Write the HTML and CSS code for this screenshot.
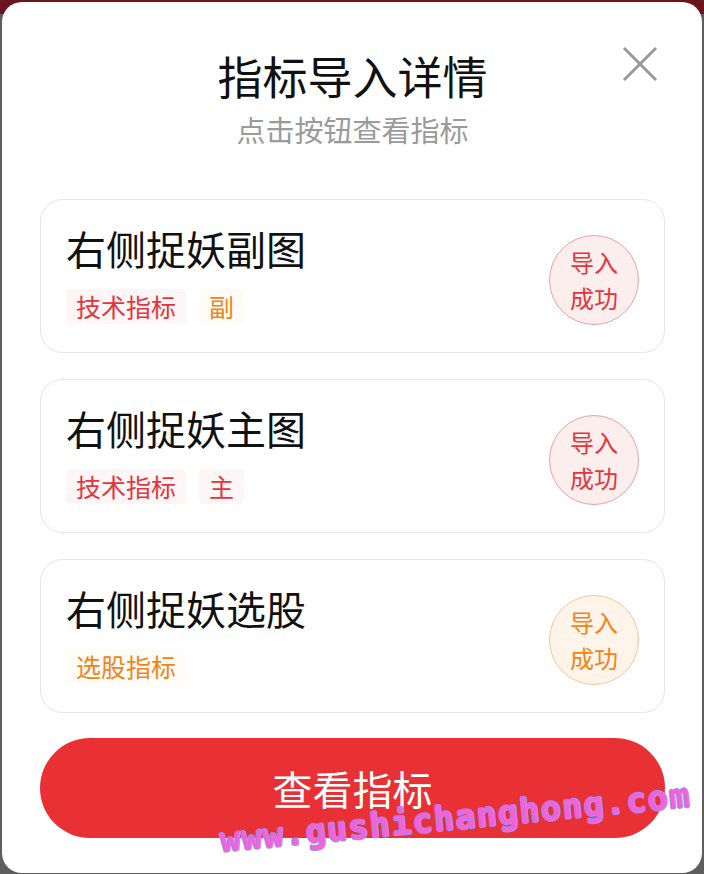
FILE: index.html
```html
<!DOCTYPE html>
<html lang="zh-CN">
<head>
    <meta charset="UTF-8">
    <meta name="viewport" content="width=device-width, initial-scale=1.0">
    <title>指标导入详情</title>
    <link rel="stylesheet" href="styles.css">
</head>
<body>
    <div class="modal">
        <button class="close" aria-label="关闭">
            <svg width="36" height="36" viewBox="0 0 36 36">
                <path d="M2 2 L34 34 M34 2 L2 34" stroke="#9a9a9a" stroke-width="3" fill="none"/>
            </svg>
        </button>

        <div class="header">
            <h1>指标导入详情</h1>
            <p class="subtitle">点击按钮查看指标</p>
        </div>

        <div class="list">
            <div class="card">
                <div class="info">
                    <h2>右侧捉妖副图</h2>
                    <div class="tags">
                        <span class="tag red">技术指标</span>
                        <span class="tag orange">副</span>
                    </div>
                </div>
                <div class="badge red">导入<br>成功</div>
            </div>

            <div class="card">
                <div class="info">
                    <h2>右侧捉妖主图</h2>
                    <div class="tags">
                        <span class="tag red">技术指标</span>
                        <span class="tag red">主</span>
                    </div>
                </div>
                <div class="badge red">导入<br>成功</div>
            </div>

            <div class="card">
                <div class="info">
                    <h2>右侧捉妖选股</h2>
                    <div class="tags">
                        <span class="tag orange">选股指标</span>
                    </div>
                </div>
                <div class="badge orange">导入<br>成功</div>
            </div>
        </div>

        <button class="view-btn">查看指标</button>

        <div class="watermark">www.gushichanghong.com</div>
    </div>
</body>
</html>
```

FILE: styles.css
```css
html, body {
    margin: 0;
    height: 100%;
}
body {
    font-family: "Noto Sans CJK SC", "Noto Sans", sans-serif;
    background: linear-gradient(#6a1420 0, #6a1420 14px, #5e5e5e 14px);
    padding: 2px;
    box-sizing: border-box;
}
.modal {
    position: relative;
    width: 700px;
    min-height: 870px;
    box-sizing: border-box;
    background-color: #fff;
    border-radius: 20px;
    padding: 47px 37px 35px 38px;
    overflow: hidden;
}
.close {
    position: absolute;
    top: 44px;
    right: 44px;
    width: 36px;
    height: 36px;
    padding: 0;
    border: none;
    background: none;
}
.close svg {
    display: block;
}
.header {
    text-align: center;
}
h1 {
    margin: 0;
    font-size: 45px;
    line-height: 53px;
    font-weight: 400;
    color: #111;
}
.subtitle {
    margin: 10px 0 0;
    font-size: 29px;
    line-height: 35px;
    color: #9a9a9a;
}
.list {
    margin-top: 52px;
    display: flex;
    flex-direction: column;
    gap: 26px;
}
.card {
    display: flex;
    align-items: center;
    justify-content: space-between;
    border: 1px solid #e6e6e6;
    border-radius: 22px;
    padding: 24px 25px 27px 25px;
}
h2 {
    margin: 0;
    font-size: 40px;
    line-height: 47px;
    font-weight: 400;
    color: #111;
}
.tags {
    display: flex;
    gap: 13px;
    margin-top: 17px;
}
.tag {
    font-size: 25px;
    line-height: 35px;
    padding: 0 10px;
    border-radius: 4px;
}
.tag.red {
    color: #e3353c;
    background-color: #fef6f6;
}
.tag.orange {
    color: #ef8519;
    background-color: #fffbf6;
}
.badge {
    width: 88px;
    height: 88px;
    margin-top: 11px;
    border-radius: 50%;
    display: flex;
    align-items: center;
    justify-content: center;
    text-align: center;
    font-size: 24px;
    line-height: 36px;
}
.badge.red {
    color: #e3353c;
    background-color: #fdeeee;
    border: 1px solid #e6a2aa;
}
.badge.orange {
    color: #ef8519;
    background-color: #fff4ea;
    border: 1px solid #f3c794;
}
.view-btn {
    display: block;
    width: 625px;
    height: 100px;
    margin-top: 25px;
    border: none;
    border-radius: 50px;
    background-color: #e83035;
    color: #fff;
    font-family: inherit;
    font-size: 40px;
}
.watermark {
    position: absolute;
    left: 220px;
    top: 818px;
    font-family: "DejaVu Sans Mono", monospace;
    font-size: 34px;
    font-weight: bold;
    letter-spacing: 1px;
    color: #f065d6;
    text-shadow: 1px 0 #a08cff, -1px 0 #a08cff, 0 1px #a08cff, 0 -1px #a08cff;
    transform: rotate(-5.5deg);
    transform-origin: left bottom;
    white-space: nowrap;
}
```
